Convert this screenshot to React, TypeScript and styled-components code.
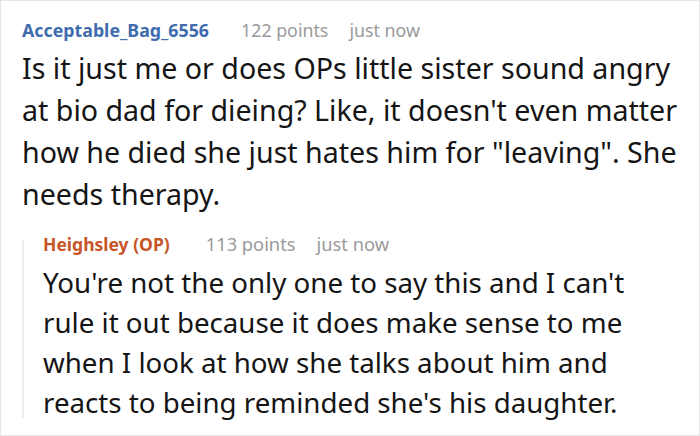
import styled, { createGlobalStyle } from 'styled-components';

const GlobalStyle = createGlobalStyle`
  html, body {
    margin: 0;
    padding: 0;
    background: #ffffff;
  }
  body {
    font-family: "Noto Sans", "Open Sans", sans-serif;
  }
`;

type CommentData = {
  author: string;
  op?: boolean;
  points: number;
  time: string;
  text: string;
};

const parent: CommentData = {
  author: 'Acceptable_Bag_6556',
  points: 122,
  time: 'just now',
  text: 'Is it just me or does OPs little sister sound angry at bio dad for dieing? Like, it doesn\'t even matter how he died she just hates him for "leaving". She needs therapy.',
};

const reply: CommentData = {
  author: 'Heighsley (OP)',
  op: true,
  points: 113,
  time: 'just now',
  text: "You're not the only one to say this and I can't rule it out because it does make sense to me when I look at how she talks about him and reacts to being reminded she's his daughter.",
};

export default function App() {
  return (
    <>
      <GlobalStyle />
      <Frame>
        <Comment>
          <Header>
            <Author>{parent.author}</Author>
            <Meta>{parent.points} points</Meta>
            <Meta>{parent.time}</Meta>
          </Header>
          <Body>{parent.text}</Body>
        </Comment>
        <Reply>
          <Header>
            <Author $op>{reply.author}</Author>
            <Meta $op>{reply.points} points</Meta>
            <Meta $op>{reply.time}</Meta>
          </Header>
          <Body $reply>{reply.text}</Body>
        </Reply>
      </Frame>
    </>
  );
}

const Frame = styled.div`
  box-sizing: border-box;
  width: 700px;
  height: 436px;
  border: 1px solid #e6e6e6;
  padding: 17px 16px 0 21px;
  overflow: hidden;
`;

const Comment = styled.section`
  display: flex;
  flex-direction: column;
`;

const Header = styled.div`
  display: flex;
  align-items: baseline;
  gap: 21px;
  height: 24px;
  line-height: 24px;
  white-space: nowrap;
`;

const Author = styled.span<{ $op?: boolean }>`
  font-size: ${(p) => (p.$op ? '17.5px' : '17.8px')};
  font-weight: 700;
  color: ${(p) => (p.$op ? '#c65527' : '#3f6cae')};
  margin-right: ${(p) => (p.$op ? '15px' : '11px')};
`;

const Meta = styled.span<{ $op?: boolean }>`
  font-size: ${(p) => (p.$op ? '18.3px' : '17.8px')};
  color: #9a9a9a;
`;

const Body = styled.p<{ $reply?: boolean }>`
  margin: ${(p) => (p.$reply ? '6px' : '5px')} 0 0;
  font-size: ${(p) => (p.$reply ? '27.7px' : '28.6px')};
  line-height: ${(p) => (p.$reply ? '40px' : '42px')};
  color: #151515;
`;

const Reply = styled.section`
  position: relative;
  display: flex;
  flex-direction: column;
  margin-top: 17px;
  padding: 0 4px 0 21px;

  &::before {
    content: '';
    position: absolute;
    left: 0;
    top: 8px;
    bottom: 4px;
    width: 2px;
    background: #ececec;
  }
`;
